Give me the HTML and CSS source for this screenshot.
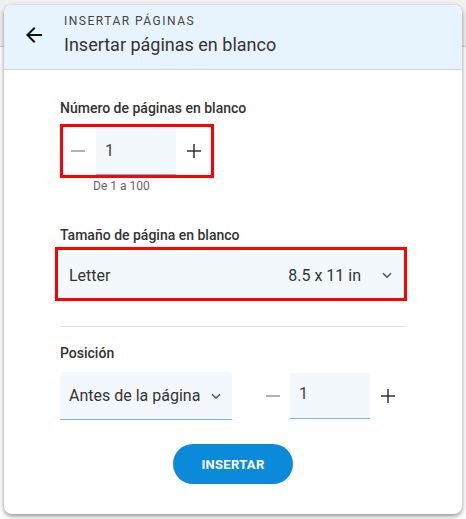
FILE: index.html
```html
<!DOCTYPE html>
<html lang="es">
<head>
    <meta charset="UTF-8">
    <meta name="viewport" content="width=device-width, initial-scale=1.0">
    <title>Insertar páginas en blanco</title>
    <link rel="stylesheet" href="styles.css">
</head>
<body>
    <div class="toolbar"></div>

    <div class="dialog">
        <div class="dialog-header">
            <button class="icon-btn back-btn" aria-label="Atrás">
                <svg width="24" height="24" viewBox="0 0 24 24"><path d="M20 11H7.83l5.59-5.59L12 4l-8 8 8 8 1.41-1.41L7.83 13H20v-2z" fill="#111"/></svg>
            </button>
            <div class="titles">
                <div class="overline">Insertar páginas</div>
                <div class="title">Insertar páginas en blanco</div>
            </div>
        </div>

        <div class="dialog-body">
            <div class="field-label">Número de páginas en blanco</div>
            <div class="highlight stepper-box">
                <div class="stepper">
                    <button class="icon-btn" aria-label="Menos">
                        <svg width="24" height="24" viewBox="0 0 24 24"><path d="M5 11.25h14v1.5H5z" fill="#999"/></svg>
                    </button>
                    <div class="num-input">1</div>
                    <button class="icon-btn" aria-label="Más">
                        <svg width="24" height="24" viewBox="0 0 24 24"><path d="M11.25 5h1.5v6.25H19v1.5h-6.25V19h-1.5v-6.25H5v-1.5h6.25z" fill="#333"/></svg>
                    </button>
                </div>
            </div>
            <div class="hint">De 1 a 100</div>

            <div class="field-label size-label">Tamaño de página en blanco</div>
            <div class="highlight select-box">
                <div class="select wide">
                    <span class="select-text">Letter</span>
                    <span class="select-extra">8.5 x 11 in</span>
                    <svg class="chevron" width="12" height="12" viewBox="0 0 12 12"><path d="M2 4.2l4 4 4-4" fill="none" stroke="#555" stroke-width="1.6"/></svg>
                </div>
            </div>

            <hr class="divider">

            <div class="field-label">Posición</div>
            <div class="position-row">
                <div class="select position-select">
                    <span class="select-text">Antes de la página</span>
                    <svg class="chevron" width="12" height="12" viewBox="0 0 12 12"><path d="M2 4.2l4 4 4-4" fill="none" stroke="#555" stroke-width="1.6"/></svg>
                </div>
                <div class="stepper small">
                    <button class="icon-btn" aria-label="Menos">
                        <svg width="24" height="24" viewBox="0 0 24 24"><path d="M5 11.25h14v1.5H5z" fill="#999"/></svg>
                    </button>
                    <div class="num-input">1</div>
                    <button class="icon-btn" aria-label="Más">
                        <svg width="24" height="24" viewBox="0 0 24 24"><path d="M11.25 5h1.5v6.25H19v1.5h-6.25V19h-1.5v-6.25H5v-1.5h6.25z" fill="#333"/></svg>
                    </button>
                </div>
            </div>

            <div class="actions">
                <button class="primary-btn">Insertar</button>
            </div>
        </div>
    </div>
</body>
</html>
```

FILE: styles.css
```css
* {
    margin: 0;
    padding: 0;
    box-sizing: border-box;
}

body {
    font-family: Roboto, "Noto Sans", sans-serif;
    background: #fff;
    color: #333;
    width: 466px;
    height: 519px;
    overflow: hidden;
    position: relative;
}

.toolbar {
    height: 47px;
    background: #f1f1f1;
    border-bottom: 1px solid #d4d4d4;
}

.dialog {
    position: absolute;
    left: 4px;
    top: 5px;
    width: 458px;
    height: 509px;
    background: #fff;
    border-radius: 8px;
    overflow: hidden;
    box-shadow: 0 2px 5px rgba(0, 0, 0, 0.45);
}

.icon-btn {
    width: 24px;
    height: 24px;
    border: none;
    background: none;
    display: flex;
    align-items: center;
    justify-content: center;
    flex-shrink: 0;
}

.dialog-header {
    height: 65px;
    background: #e8f4fd;
    border-bottom: 1px solid #cdd7de;
    display: flex;
    align-items: flex-start;
    padding: 9px 0 0 18px;
}

.back-btn {
    margin-top: 9px;
}

.titles {
    margin-left: 18px;
}

.overline {
    font-size: 12px;
    line-height: 15px;
    letter-spacing: 1.5px;
    text-transform: uppercase;
    color: #444;
}

.title {
    margin-top: 5px;
    font-size: 18px;
    line-height: 22px;
    color: #333;
}

.dialog-body {
    padding: 30px 56px 0;
}

.field-label {
    font-size: 14px;
    line-height: 16px;
    font-weight: 500;
    color: #333;
}

.size-label {
    margin-top: 34px;
}

.highlight {
    border: 3px solid #f00;
}

.stepper-box {
    display: inline-block;
    margin-top: 8px;
    width: 154px;
    height: 54px;
    padding: 0 5px 0 3px;
}

.stepper {
    display: flex;
    align-items: center;
    gap: 6px;
    height: 100%;
}

.num-input {
    width: 80px;
    height: 47px;
    background: #f3f8fc;
    border-bottom: 1px solid #74b5e2;
    font-size: 16px;
    line-height: 46px;
    padding-left: 9px;
    color: #444;
}

.hint {
    margin-top: 1px;
    padding-left: 33px;
    font-size: 12px;
    line-height: 14px;
    color: #666;
}

.select-box {
    margin: 4px -1px 0 -5px;
    height: 54px;
    padding: 3px 1px 1px 2px;
}

.select {
    display: flex;
    align-items: center;
    height: 100%;
    background: #f3f8fc;
    border-radius: 4px 4px 0 0;
    padding: 0 10px 0 9px;
    font-size: 16px;
    color: #333;
}

.select-text {
    flex: 1;
}

.select-extra {
    margin-right: 20px;
}

.chevron {
    flex-shrink: 0;
}

.divider {
    border: none;
    border-top: 1px solid #e2e2e2;
    margin: 25px 0 18px;
}

.position-row {
    display: flex;
    align-items: center;
    margin-top: 11px;
    height: 48px;
}

.position-select {
    width: 172px;
    border-bottom: 1px solid #74b5e2;
    padding-right: 10px;
}

.stepper.small {
    margin-left: 29px;
    gap: 5px;
}

.stepper.small .num-input {
    height: 46px;
    line-height: 42px;
}

.stepper.small .icon-btn:last-child {
    margin-left: 1px;
}

.actions {
    display: flex;
    justify-content: center;
    margin-top: 24px;
}

.primary-btn {
    width: 120px;
    height: 40px;
    border: none;
    border-radius: 20px;
    background: #0b8ad9;
    color: #fff;
    font-family: Roboto, "Noto Sans", sans-serif;
    font-size: 13px;
    font-weight: 700;
    text-transform: uppercase;
    letter-spacing: 0.3px;
}
```
